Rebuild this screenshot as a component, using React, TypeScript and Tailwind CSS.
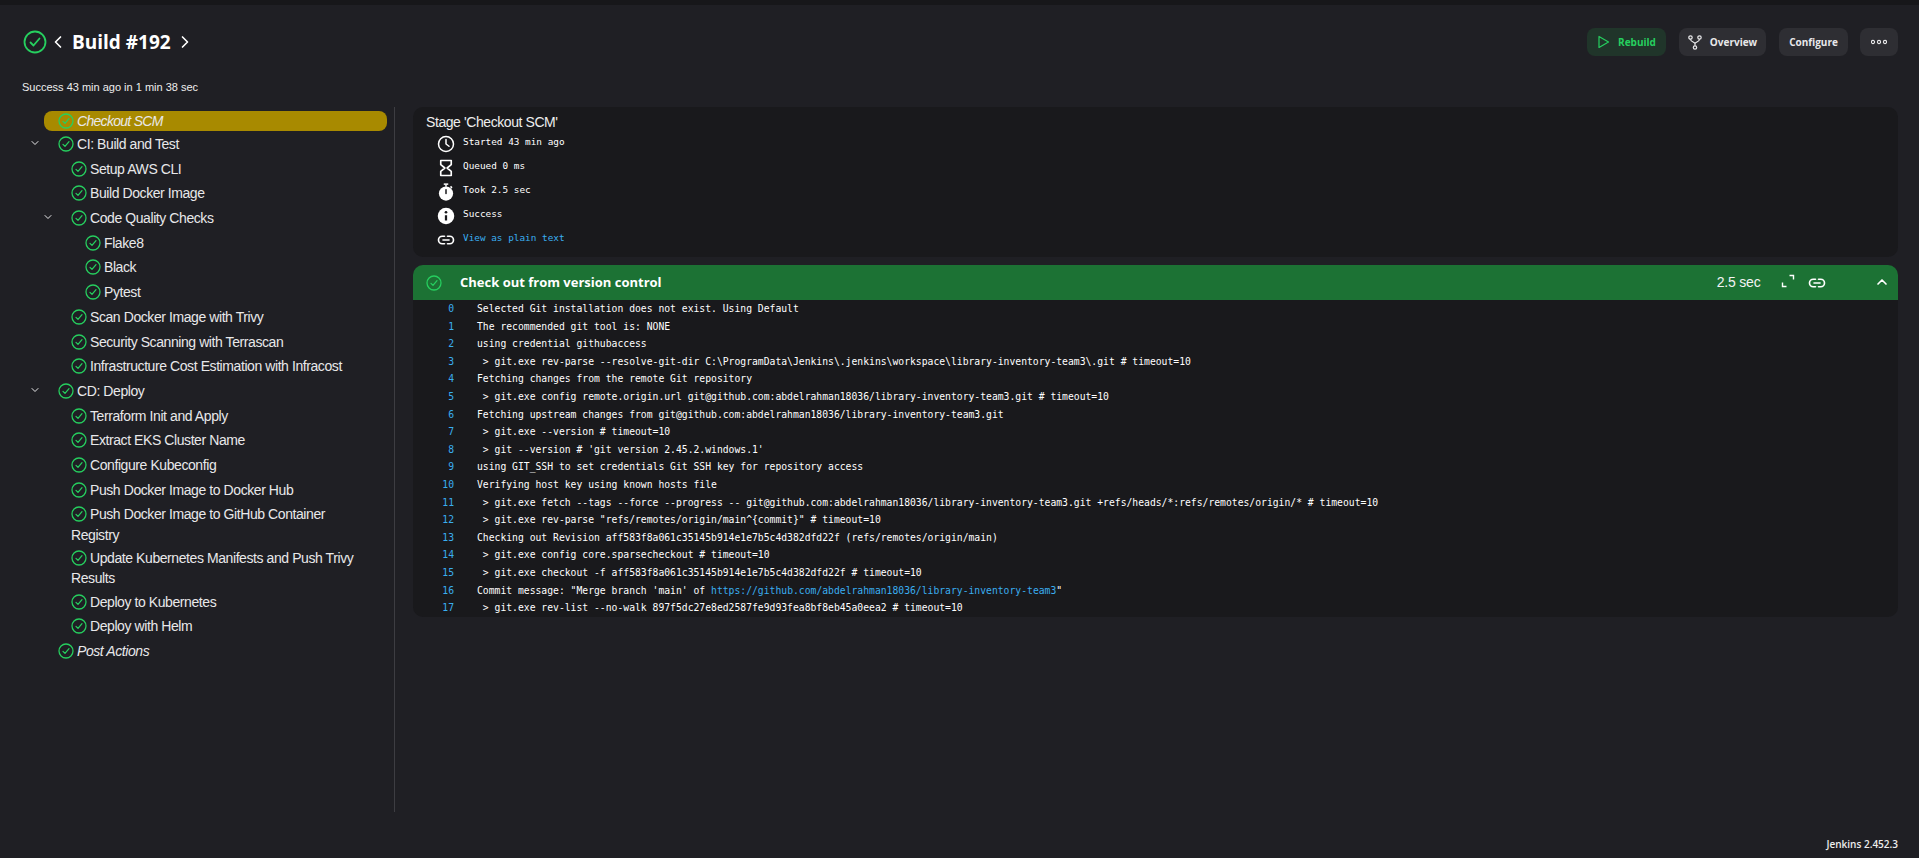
import React from "react";
import { ChevronLeft, ChevronRight, ChevronDown, ChevronUp } from "lucide-react";

function Check({ size = 16, stroke = 1.9 }: { size?: number; stroke?: number }) {
  return (
    <svg width={size} height={size} viewBox="0 0 24 24" fill="none" stroke="#26cf5f" strokeWidth={stroke} strokeLinecap="round" strokeLinejoin="round" className="inline-block shrink-0 align-[-3px]">
      <circle cx="12" cy="12" r="10.5" />
      <path d="M7.5 12.5l3 3 6-7" />
    </svg>
  );
}

function LinkIcon({ size = 18 }: { size?: number }) {
  return (
    <svg width={size} height={size} viewBox="0 0 24 24" fill="none" stroke="white" strokeWidth="2.2" strokeLinecap="round">
      <path d="M10 7H7a5 5 0 0 0 0 10h3" />
      <path d="M14 7h3a5 5 0 0 1 0 10h-3" />
      <path d="M8 12h8" />
    </svg>
  );
}

type Row = { t: string; lvl: number; chev?: boolean; it?: boolean; sel?: boolean; wrap?: boolean };
const rows: Row[] = [
  { t: "Checkout SCM", lvl: 0, it: true, sel: true },
  { t: "CI: Build and Test", lvl: 0, chev: true },
  { t: "Setup AWS CLI", lvl: 1 },
  { t: "Build Docker Image", lvl: 1 },
  { t: "Code Quality Checks", lvl: 1, chev: true },
  { t: "Flake8", lvl: 2 },
  { t: "Black", lvl: 2 },
  { t: "Pytest", lvl: 2 },
  { t: "Scan Docker Image with Trivy", lvl: 1 },
  { t: "Security Scanning with Terrascan", lvl: 1 },
  { t: "Infrastructure Cost Estimation with Infracost", lvl: 1 },
  { t: "CD: Deploy", lvl: 0, chev: true },
  { t: "Terraform Init and Apply", lvl: 1 },
  { t: "Extract EKS Cluster Name", lvl: 1 },
  { t: "Configure Kubeconfig", lvl: 1 },
  { t: "Push Docker Image to Docker Hub", lvl: 1 },
  { t: "Push Docker Image to GitHub Container Registry", lvl: 1, wrap: true },
  { t: "Update Kubernetes Manifests and Push Trivy Results", lvl: 1, wrap: true },
  { t: "Deploy to Kubernetes", lvl: 1 },
  { t: "Deploy with Helm", lvl: 1 },
  { t: "Post Actions", lvl: 0, it: true },
];

const logs: React.ReactNode[] = [
  "Selected Git installation does not exist. Using Default",
  "The recommended git tool is: NONE",
  "using credential githubaccess",
  " > git.exe rev-parse --resolve-git-dir C:\\ProgramData\\Jenkins\\.jenkins\\workspace\\library-inventory-team3\\.git # timeout=10",
  "Fetching changes from the remote Git repository",
  " > git.exe config remote.origin.url git@github.com:abdelrahman18036/library-inventory-team3.git # timeout=10",
  "Fetching upstream changes from git@github.com:abdelrahman18036/library-inventory-team3.git",
  " > git.exe --version # timeout=10",
  " > git --version # 'git version 2.45.2.windows.1'",
  "using GIT_SSH to set credentials Git SSH key for repository access",
  "Verifying host key using known hosts file",
  " > git.exe fetch --tags --force --progress -- git@github.com:abdelrahman18036/library-inventory-team3.git +refs/heads/*:refs/remotes/origin/* # timeout=10",
  " > git.exe rev-parse \"refs/remotes/origin/main^{commit}\" # timeout=10",
  "Checking out Revision aff583f8a061c35145b914e1e7b5c4d382dfd22f (refs/remotes/origin/main)",
  " > git.exe config core.sparsecheckout # timeout=10",
  " > git.exe checkout -f aff583f8a061c35145b914e1e7b5c4d382dfd22f # timeout=10",
  <>Commit message: "Merge branch 'main' of <span className="text-[#3aaef0]">https://github.com/abdelrahman18036/library-inventory-team3</span>"</>,
  " > git.exe rev-list --no-walk 897f5dc27e8ed2587fe9d93fea8bf8eb45a0eea2 # timeout=10",
];

const meta = [
  {
    t: "Started 43 min ago",
    icon: (
      <svg width="18" height="18" viewBox="0 0 24 24" fill="none" stroke="white" strokeWidth="2" strokeLinecap="round" strokeLinejoin="round">
        <circle cx="12" cy="12" r="10" />
        <path d="M12 6v6l4 3" />
      </svg>
    ),
  },
  {
    t: "Queued 0 ms",
    icon: (
      <svg width="18" height="18" viewBox="0 0 24 24" fill="none" stroke="white" strokeWidth="2.2" strokeLinejoin="round">
        <path d="M5 2h14v5.5L13.5 12l5.5 4.5V22H5v-5.5l5.5-4.5L5 7.5z" />
      </svg>
    ),
  },
  {
    t: "Took 2.5 sec",
    icon: (
      <svg width="18" height="18" viewBox="0 0 24 24">
        <circle cx="12" cy="14" r="9.5" fill="white" />
        <path d="M9 1.5h6" stroke="white" strokeWidth="2" />
        <path d="M12 2v3M18 4.5l2 2" stroke="white" strokeWidth="2" />
        <path d="M12 9v5" stroke="#19191c" strokeWidth="2" strokeLinecap="round" />
      </svg>
    ),
  },
  {
    t: "Success",
    icon: (
      <svg width="18" height="18" viewBox="0 0 24 24">
        <circle cx="12" cy="12" r="11" fill="white" />
        <path d="M12 11v7" stroke="#19191c" strokeWidth="3" />
        <circle cx="12" cy="7" r="1.8" fill="#19191c" />
      </svg>
    ),
  },
  { t: "View as plain text", link: true, icon: <LinkIcon /> },
];

const mono = "font-['DejaVu_Sans_Mono',monospace]";

export default function App() {
  return (
    <div className="h-[858px] overflow-hidden bg-[#1f1f24] text-white font-['Liberation_Sans',sans-serif]">
      <div className="h-[5px] bg-[#17171a]" />
      <header className="flex items-center justify-between pl-[23px] pr-[21px] pt-[23px] font-['Open_Sans',sans-serif]">
        <div className="flex items-center">
          <Check size={24} stroke={1.8} />
          <ChevronLeft size={20} strokeWidth={2} className="ml-[1px]" />
          <h1 className="ml-[4px] text-[19px] leading-[28px] font-bold">Build #192</h1>
          <ChevronRight size={20} strokeWidth={2} className="ml-[4px]" />
        </div>
        <div className="flex items-center text-[10px] font-bold">
          <button className="h-[28px] w-[79px] rounded-lg bg-[#20352a] text-[#26cf5f] flex items-center justify-center gap-[8px]">
            <svg width="13" height="14" viewBox="0 0 13 14" fill="none" stroke="#26cf5f" strokeWidth="1.2" strokeLinejoin="round"><path d="M2 1.5v11l9.5-5.5z" /></svg>
            Rebuild
          </button>
          <button className="ml-[13px] h-[28px] w-[87px] rounded-lg bg-[#2e2e33] text-[#e8e8ea] flex items-center justify-center gap-[8px]">
            <svg width="14" height="15" viewBox="0 0 14 15" fill="none" stroke="#e8e8ea" strokeWidth="1.2">
              <circle cx="2.5" cy="2.5" r="1.7" />
              <circle cx="11.5" cy="2.5" r="1.7" />
              <circle cx="7" cy="12.5" r="1.7" />
              <path d="M2.5 4.2c0 3 4.5 2.6 4.5 4.6v2M11.5 4.2c0 3-4.5 2.6-4.5 4.6" />
            </svg>
            Overview
          </button>
          <button className="ml-[13px] h-[28px] w-[69px] rounded-lg bg-[#2e2e33] text-[#e8e8ea]">Configure</button>
          <button className="ml-[12px] h-[28px] w-[38px] rounded-lg bg-[#2e2e33] flex items-center justify-center">
            <svg width="16" height="6" viewBox="0 0 16 6" fill="none" stroke="#e8e8ea" strokeWidth="1.1">
              <circle cx="2" cy="3" r="1.6" />
              <circle cx="8" cy="3" r="1.6" />
              <circle cx="14" cy="3" r="1.6" />
            </svg>
          </button>
        </div>
      </header>
      <p className="pl-[22px] pt-[23px] text-[11px] leading-[16px] text-[#eeeeee]">Success 43 min ago in 1 min 38 sec</p>
      <main className="flex pt-[12px]">
        <nav className="w-[395px] h-[705px] shrink-0 border-r border-[#3d3d42] pl-[44px] pr-[7px] text-[14px] tracking-[-0.42px] text-[#e8e8ea]">
          {rows.map((r) => (
            <div
              key={r.t}
              className={`relative ${r.wrap ? "leading-[20.8px] pt-[2px] pr-[16px]" : "leading-[20px] py-[2.35px]"} ${r.sel ? "bg-[#a88a00] rounded-[8px] !py-0 h-[20px] mt-[4px] mb-[0.7px] pl-[14px] tracking-[-0.7px]" : ""} ${r.lvl === 0 && !r.sel ? "pl-[14px]" : ""} ${r.lvl === 1 ? "pl-[27px]" : ""} ${r.lvl === 2 ? "pl-[41px]" : ""} ${r.it ? "italic" : ""}`}
            >
              {r.chev && (
                <ChevronDown size={12} strokeWidth={2} className={`absolute top-[5px] ${r.lvl === 0 ? "left-[-15px]" : "left-[-2px]"}`} />
              )}
              <Check size={16} />
              <span className="ml-[3px]">{r.t}</span>
            </div>
          ))}
        </nav>
        <section className="flex-1 ml-[18px] mr-[21px] min-w-0">
          <div className="h-[150px] rounded-[10px] bg-[#19191c] pl-[13px] pt-[5px]">
            <h2 className="text-[14px] leading-[20px] tracking-[-0.42px] text-[#eeeeee]">Stage 'Checkout SCM'</h2>
            <ul className={`mt-0 ${mono} text-[9.4px]`}>
              {meta.map((m) => (
                <li key={m.t} className="flex items-center h-[24px]">
                  <span className="ml-[11px] w-[18px] flex justify-center">{m.icon}</span>
                  <span className={`ml-[8px] mb-[3px] ${m.link ? "text-[#3aaef0]" : "text-white"}`}>{m.t}</span>
                </li>
              ))}
            </ul>
          </div>
          <div className="mt-[8px] h-[35px] rounded-t-[10px] bg-[#1c7234] flex items-center pl-[13px] pr-[8px]">
            <Check size={16} />
            <span className="ml-[18px] text-[13px] font-bold font-['Open_Sans',sans-serif]">Check out from version control</span>
            <span className="ml-auto text-[14px] tracking-[-0.2px] text-[#f4f4f4]">2.5 sec</span>
            <svg width="14" height="14" viewBox="0 0 14 14" fill="none" stroke="white" strokeWidth="1.4" className="ml-[20px] mb-[3px]">
              <path d="M8.5 1.5h4v4M1.5 8.5v4h4" />
            </svg>
            <span className="ml-[13.5px] flex"><LinkIcon /></span>
            <ChevronUp size={16} strokeWidth={2.5} className="ml-[48px] mb-[2px]" />
          </div>
          <div className={`rounded-b-[10px] bg-[#19191c] ${mono} text-[9.72px] leading-[17.6px]`}>
            {logs.map((l, i) => (
              <div key={i} className="flex">
                <span className="w-[41px] text-right text-[#3aaef0] shrink-0">{i}</span>
                <span className="ml-[23px] whitespace-pre text-white">{l}</span>
              </div>
            ))}
          </div>
        </section>
      </main>
      <p className="pt-[25px] pr-[21px] text-right text-[10px] leading-[14px] font-semibold text-[#eeeeee] font-['Open_Sans',sans-serif]">Jenkins 2.452.3</p>
    </div>
  );
}
